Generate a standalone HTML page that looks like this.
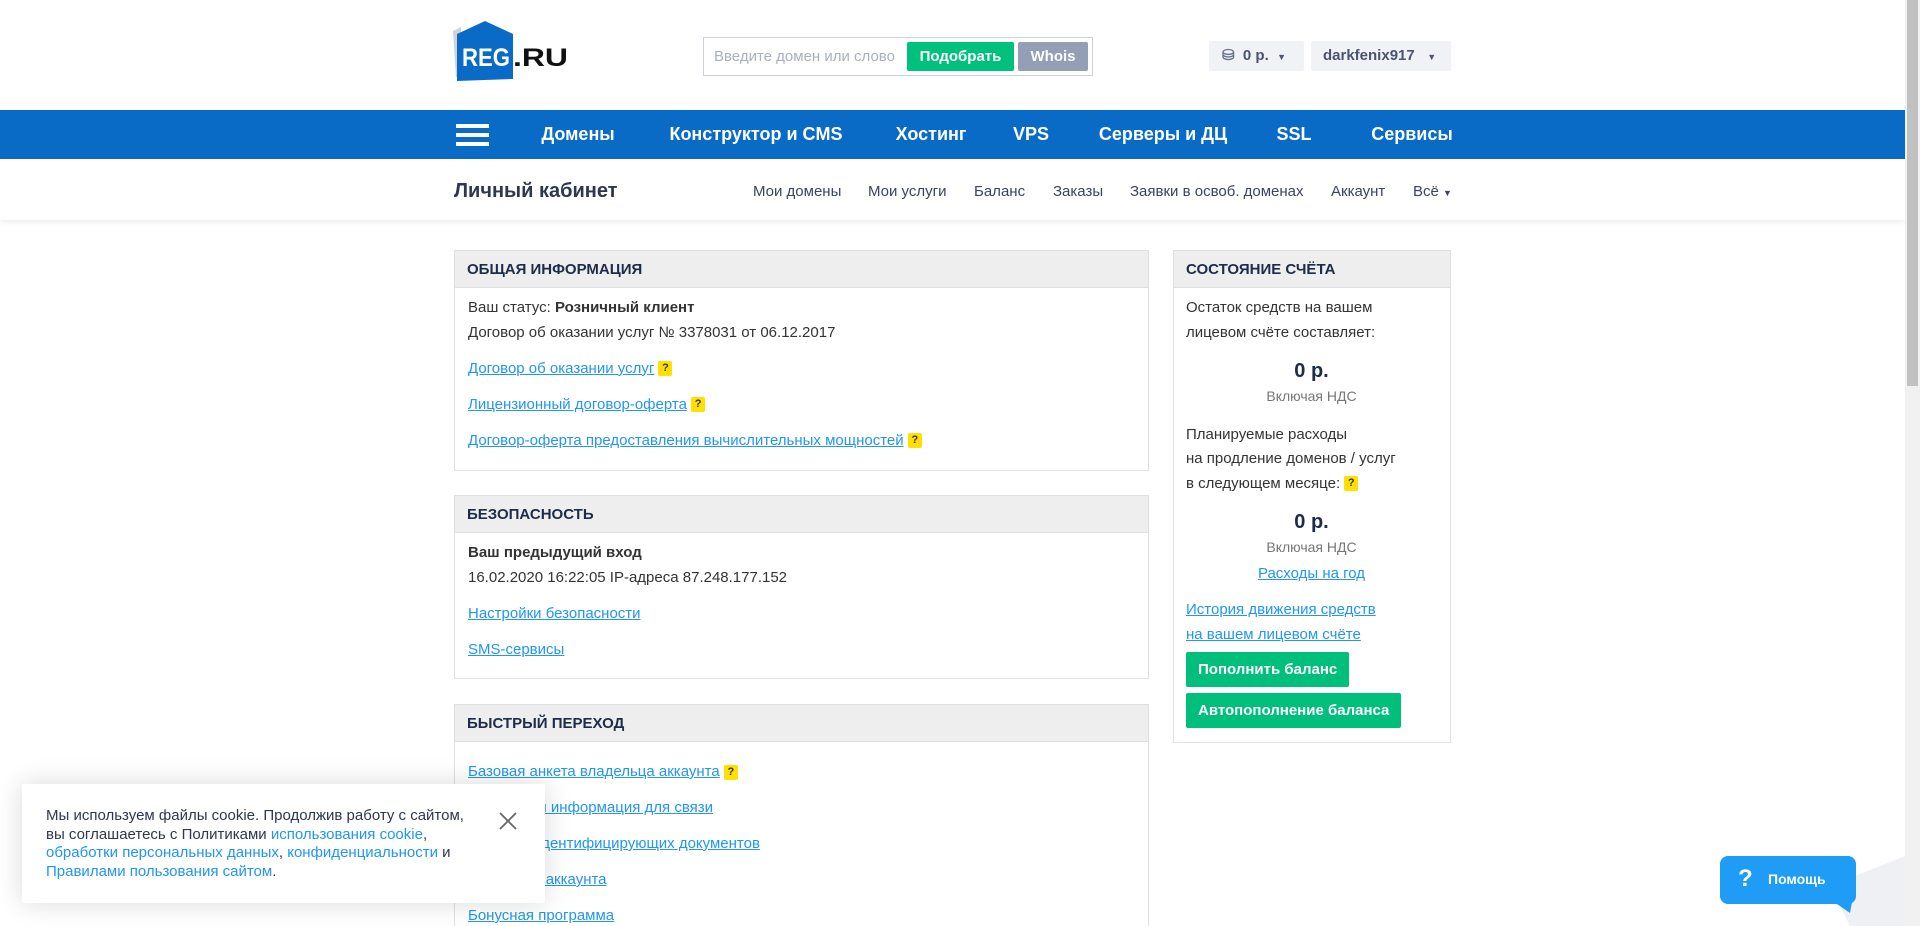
<!DOCTYPE html>
<html style="overflow:hidden;height:926px"><head><meta charset="utf-8"><style>
*{box-sizing:border-box;margin:0;padding:0}
body{width:1920px;height:926px;overflow:hidden;background:#fff;font-family:"Liberation Sans",sans-serif;color:#333;position:relative}
.hdr{height:110px;position:relative}
.abs{position:absolute}
.nav{position:absolute;top:110px;left:0;width:1905px;height:49px;background:#0a6bc6}
.nav span{position:absolute;top:14px;color:#fff;font-weight:bold;font-size:18px;transform:translateX(-50%);white-space:nowrap}
.sub{position:absolute;top:159px;left:0;width:1905px;height:61px;background:#fff;box-shadow:0 2px 6px rgba(0,0,0,.08)}
.sub a{position:absolute;top:24px;font-size:15px;color:#3a4460;text-decoration:none;white-space:nowrap}
.panel{position:absolute;border:1px solid #dde1e6;background:#fff}
.ph{height:37px;background:#eeeeee;border-bottom:1px solid #dde1e6;font-weight:bold;font-size:15px;color:#1c2c4a;padding:10px 12px;text-transform:uppercase}
.pb{padding:8px 13px;font-size:15px;line-height:24.5px;color:#333}
.pb a{color:#2196f3;text-decoration:underline}
.q{display:inline-block;width:14px;height:15px;background:#ffe000;color:#333;font-size:11px;font-weight:bold;text-align:center;line-height:15px;border-radius:2px;vertical-align:middle;text-decoration:none}
.lk{margin-top:11.5px}
.btn{display:inline-block;background:#00bf7a;color:#fff;font-weight:bold;font-size:15px;padding:0 12px;height:35px;line-height:35px;border-radius:2px}
</style></head><body>
<div class="hdr">
<svg class="abs" style="left:453px;top:21px" width="125" height="62" viewBox="0 0 125 62">
<polygon points="0,10 8,6 8,56 3,56" fill="#cfd3d8"/>
<polygon points="4,13 32,0 60,13 60,58 4,60" fill="#0a6bc6"/>
<text x="9" y="45" font-family="Liberation Sans" font-weight="bold" font-size="25" fill="#fff" textLength="48" lengthAdjust="spacingAndGlyphs">REG</text>
<text x="60" y="45" font-family="Liberation Sans" font-weight="bold" font-size="25" fill="#111" textLength="55" lengthAdjust="spacingAndGlyphs">.RU</text>
</svg>
<div class="abs" style="left:703px;top:37px;width:390px;height:39px;border:1px solid #cdd3dc"></div>
<div class="abs" style="left:714px;top:48px;font-size:15px;color:#a9b0bd">Введите домен или слово</div>
<div class="abs" style="left:907px;top:42px;width:107px;height:29px;background:#00c07d;border-radius:2px;color:#fff;font-weight:bold;font-size:15px;text-align:center;line-height:29px">Подобрать</div>
<div class="abs" style="left:1018px;top:42px;width:70px;height:29px;background:#949fb5;border-radius:2px;color:#fff;font-weight:bold;font-size:15px;text-align:center;line-height:29px">Whois</div>
<div class="abs" style="left:1209px;top:41px;width:95px;height:30px;background:#f0f2f5;border-radius:2px;font-size:15px;font-weight:bold;color:#4a5470;line-height:30px;padding-left:13px"><span style="color:#6a7388">⛁</span>&nbsp; 0 р. &nbsp;<span style="font-size:9px">▼</span></div>
<div class="abs" style="left:1311px;top:41px;width:140px;height:30px;background:#f0f2f5;border-radius:2px;font-size:15px;font-weight:bold;color:#4a5470;line-height:30px;padding-left:12px">darkfenix917 &nbsp;&nbsp;<span style="font-size:9px">▼</span></div>
</div>
<div class="nav">
<div class="abs" style="left:456px;top:14px;width:33px;height:4px;background:#fff"></div>
<div class="abs" style="left:456px;top:23px;width:33px;height:4px;background:#fff"></div>
<div class="abs" style="left:456px;top:32px;width:33px;height:4px;background:#fff"></div>
<span style="left:578px">Домены</span><span style="left:756px">Конструктор и CMS</span><span style="left:931px">Хостинг</span><span style="left:1031px">VPS</span><span style="left:1163px">Серверы и ДЦ</span><span style="left:1294px">SSL</span><span style="left:1412px">Сервисы</span>
</div>
<div class="sub">
<div class="abs" style="left:454px;top:21px;font-size:20px;font-weight:bold;color:#2e3650">Личный кабинет</div>
<a style="left:753px">Мои домены</a><a style="left:868px">Мои услуги</a><a style="left:974px">Баланс</a><a style="left:1053px">Заказы</a><a style="left:1130px">Заявки в освоб. доменах</a><a style="left:1331px">Аккаунт</a><a style="left:1413px">Всё <span style="font-size:9px">▼</span></a>
</div>
<div class="panel" style="left:454px;top:250px;width:695px;height:221px">
<div class="ph">Общая информация</div>
<div class="pb">Ваш статус: <b>Розничный клиент</b><br>Договор об оказании услуг № 3378031 от 06.12.2017
<div class="lk"><a>Договор об оказании услуг</a> <span class="q">?</span></div>
<div class="lk"><a>Лицензионный договор-оферта</a> <span class="q">?</span></div>
<div class="lk"><a>Договор-оферта предоставления вычислительных мощностей</a> <span class="q">?</span></div>
</div></div>
<div class="panel" style="left:454px;top:495px;width:695px;height:184px">
<div class="ph">Безопасность</div>
<div class="pb"><b>Ваш предыдущий вход</b><br>16.02.2020 16:22:05 IP-адреса 87.248.177.152
<div class="lk"><a>Настройки безопасности</a></div>
<div class="lk"><a>SMS-сервисы</a></div>
</div></div>
<div class="panel" style="left:454px;top:704px;width:695px;height:230px">
<div class="ph">Быстрый переход</div>
<div class="pb" style="padding-top:18px">
<div><a>Базовая анкета владельца аккаунта</a> <span class="q">?</span></div>
<div class="lk"><a>Контактная информация для связи</a></div>
<div class="lk"><a>Загрузка идентифицирующих документов</a></div>
<div class="lk"><a>Настройки аккаунта</a></div>
<div class="lk"><a>Бонусная программа</a></div>
</div></div>
<div class="panel" style="left:1173px;top:250px;width:278px;height:493px">
<div class="ph">Состояние счёта</div>
<div class="pb" style="padding-left:12px">Остаток средств на вашем<br>лицевом счёте составляет:
<div style="text-align:center;font-size:20px;font-weight:bold;color:#1c2c4a;margin-top:13px;line-height:26px">0 р.</div>
<div style="text-align:center;font-size:14px;color:#777">Включая НДС</div>
<div style="margin-top:14px">Планируемые расходы<br>на продление доменов / услуг<br>в следующем месяце: <span class="q">?</span></div>
<div style="text-align:center;font-size:20px;font-weight:bold;color:#1c2c4a;margin-top:13px;line-height:26px">0 р.</div>
<div style="text-align:center;font-size:14px;color:#777">Включая НДС</div>
<div style="text-align:center;margin-top:2px"><a>Расходы на год</a></div>
<div style="margin-top:12px"><a>История движения средств<br>на вашем лицевом счёте</a></div>
<div style="margin-top:5px"><span class="btn">Пополнить баланс</span></div>
<div style="margin-top:6px"><span class="btn">Автопополнение баланса</span></div>
</div></div>
<div class="abs" style="left:22px;top:784px;width:523px;height:119px;background:#fff;box-shadow:0 0 25px rgba(0,0,0,.15)">
<div class="abs" style="left:24px;top:23px;font-size:15px;line-height:18.5px;color:#2e3650;width:440px">Мы используем файлы cookie. Продолжив работу с сайтом, вы соглашаетесь с Политиками <span style="color:#2196f3">использования cookie</span>, <span style="color:#2196f3">обработки персональных данных</span>, <span style="color:#2196f3">конфиденциальности</span> и <span style="color:#2196f3">Правилами пользования сайтом</span>.</div>
<svg class="abs" style="left:477px;top:28px" width="18" height="18"><path d="M1 1L17 17M17 1L1 17" stroke="#666" stroke-width="1.8"/></svg>
</div>
<svg class="abs" style="left:1720px;top:856px" width="185" height="70"><polygon points="110,30 185,0 185,70 130,70" fill="#eef0f4"/></svg>
<div class="abs" style="left:1720px;top:856px;width:136px;height:48px;background:#1f9cf6;border-radius:8px;color:#fff">
<span class="abs" style="left:18px;top:9px;font-size:24px;font-weight:bold">?</span>
<span class="abs" style="left:48px;top:15px;font-size:14px;font-weight:bold">Помощь</span></div>
<svg class="abs" style="left:1834px;top:902px" width="18" height="12"><polygon points="0,0 18,0 16,11" fill="#1f9cf6"/></svg>
<div class="abs" style="left:1905px;top:0;width:15px;height:926px;background:#f1f1f1"></div>
<div class="abs" style="left:1907px;top:0;width:11px;height:386px;background:#c1c1c1"></div>
</body></html>
